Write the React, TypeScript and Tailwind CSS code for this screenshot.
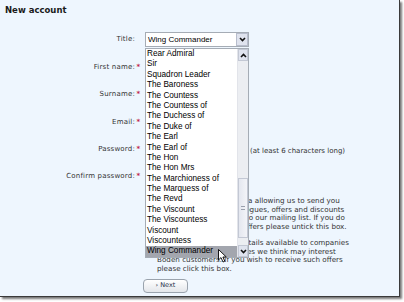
const titles = [
  "Rear Admiral",
  "Sir",
  "Squadron Leader",
  "The Baroness",
  "The Countess",
  "The Countess of",
  "The Duchess of",
  "The Duke of",
  "The Earl",
  "The Earl of",
  "The Hon",
  "The Hon Mrs",
  "The Marchioness of",
  "The Marquess of",
  "The Revd",
  "The Viscount",
  "The Viscountess",
  "Viscount",
  "Viscountess",
  "Wing Commander",
];

const rows = [
  { label: "Title:", required: false },
  { label: "First name:", required: true },
  { label: "Surname:", required: true },
  { label: "Email:", required: true },
  { label: "Password:", required: true, hint: "(at least 6 characters long)" },
  { label: "Confirm password:", required: true },
];

function Chevron({ up = false }: { up?: boolean }) {
  return (
    <svg width="7" height="5" viewBox="0 0 7 5">
      <path
        d={up ? "M1 4 L3.5 1.5 L6 4" : "M1 1 L3.5 3.5 L6 1"}
        fill="none"
        stroke="#111"
        strokeWidth="1.6"
      />
    </svg>
  );
}

function Cursor() {
  return (
    <svg width="11" height="14" viewBox="0 0 11 14">
      <path
        d="M0.5 0.5 L0.5 11 L3 8.6 L5 13 L6.8 12.2 L4.9 8 L8.3 8 Z"
        fill="#fff"
        stroke="#000"
        strokeWidth="0.9"
        strokeLinejoin="round"
      />
    </svg>
  );
}

export default function App() {
  return (
    <div className="w-[404px] h-[302px] bg-white overflow-hidden" style={{ fontFamily: '"DejaVu Sans", Verdana, sans-serif' }}>
      <div className="relative w-[400px] h-[297px] bg-[#eef6fe] border-r border-b border-[#3a3a3a] shadow-[2px_2px_2px_#777] flex flex-col">
        <h1 className="pl-[5px] pt-[5px] text-[8.5px] leading-[10px] font-bold text-[#1a1a1a]">New account</h1>

        {/* Formulario */}
        <div className="mt-[11px] flex flex-col text-[7px] text-[#333]">
          {rows.map((row) => (
            <div key={row.label} className="h-[27.4px] flex items-center">
              <span className="w-[135px] text-right tracking-[0.2px]">{row.label}</span>
              <span className="w-[10px] pl-[1.5px] text-[#c0264a] font-bold">{row.required ? "*" : ""}</span>
              {row.label === "Title:" ? (
                <div className="w-[104px] h-[15px] bg-white border border-[#a5acb5] flex items-center justify-between">
                  <span className="pl-[2px] text-[8px] text-black" style={{ fontFamily: '"Liberation Sans", Arial, sans-serif' }}>
                    Wing Commander
                  </span>
                  <span className="w-[12px] h-[13px] bg-[#dfe3ee] border border-[#b7bdcc] flex items-center justify-center">
                    <Chevron />
                  </span>
                </div>
              ) : (
                <div className="w-[104px] h-[14px] bg-white border border-[#a5acb5]" />
              )}
              {row.hint ? <span className="ml-[1px] mt-[4px] whitespace-nowrap">{row.hint}</span> : null}
            </div>
          ))}

          <div className="mt-[7px] ml-[145px] flex items-start leading-[8.45px] text-[7.2px] whitespace-nowrap">
            <input type="checkbox" defaultChecked className="w-[9px] h-[9px] m-0" />
            <div className="flex flex-col ml-[3px]">
              <span>Tick here to receive media allowing us to send you</span>
              <span>our latest seasonal catalogues, offers and discounts</span>
              <span>as well as adding you onto our mailing list. If you do</span>
              <span>not wish to receive any offers please untick this box.</span>
            </div>
          </div>

          <div className="mt-[8px] ml-[145px] flex items-start leading-[8.45px] text-[7.2px] whitespace-nowrap">
            <input type="checkbox" className="w-[9px] h-[9px] m-0" />
            <div className="flex flex-col ml-[3px]">
              <span>We may make all your details available to companies</span>
              <span>whose products or services we think may interest</span>
              <span>Boden customers. If you wish to receive such offers</span>
              <span>please click this box.</span>
            </div>
          </div>

          <div className="mt-[6px] ml-[143px]">
            <button className="w-[45px] h-[14px] rounded-[4px] border border-[#9aa3ad] bg-gradient-to-b from-white to-[#e3e6ea] text-[6.5px] text-[#1b2a44] flex items-center justify-center gap-[2px]">
              <span>›</span>
              <span>Next</span>
            </button>
          </div>
        </div>

        {/* Lista desplegada */}
        <div
          className="absolute left-[145px] top-[48px] w-[104px] h-[210px] bg-white border border-[#a5acb5] flex"
          style={{ fontFamily: '"Liberation Sans", Arial, sans-serif' }}
        >
          <ul className="flex-1 flex flex-col text-[8.2px] text-black">
            {titles.map((t, i) => (
              <li
                key={t}
                className={
                  i === titles.length - 1
                    ? "h-[10.4px] leading-[10.4px] pl-[1px] bg-[#a3a6ae]"
                    : "h-[10.4px] leading-[10.4px] pl-[1px]"
                }
              >
                {t}
              </li>
            ))}
          </ul>
          <div className="w-[11px] bg-[#eceef2] border-l border-[#e2e4ea] flex flex-col">
            <div className="h-[12px] bg-[#dfe3ee] border border-[#c3c8d4] flex items-center justify-center">
              <Chevron up />
            </div>
            <div className="flex-1 flex flex-col">
              <div className="h-[117px]" />
              <div className="h-[60px] bg-gradient-to-r from-[#e4e7ef] to-[#f3f4f8] border border-[#c3c8d4] flex items-center justify-center">
                <span className="w-[4px] h-[4px] border-y border-[#9aa0ad]" />
              </div>
            </div>
            <div className="h-[12px] bg-[#dfe3ee] border border-[#c3c8d4] flex items-center justify-center">
              <Chevron />
            </div>
          </div>
        </div>

        <div className="absolute left-[218px] top-[249px]">
          <Cursor />
        </div>
      </div>
    </div>
  );
}
